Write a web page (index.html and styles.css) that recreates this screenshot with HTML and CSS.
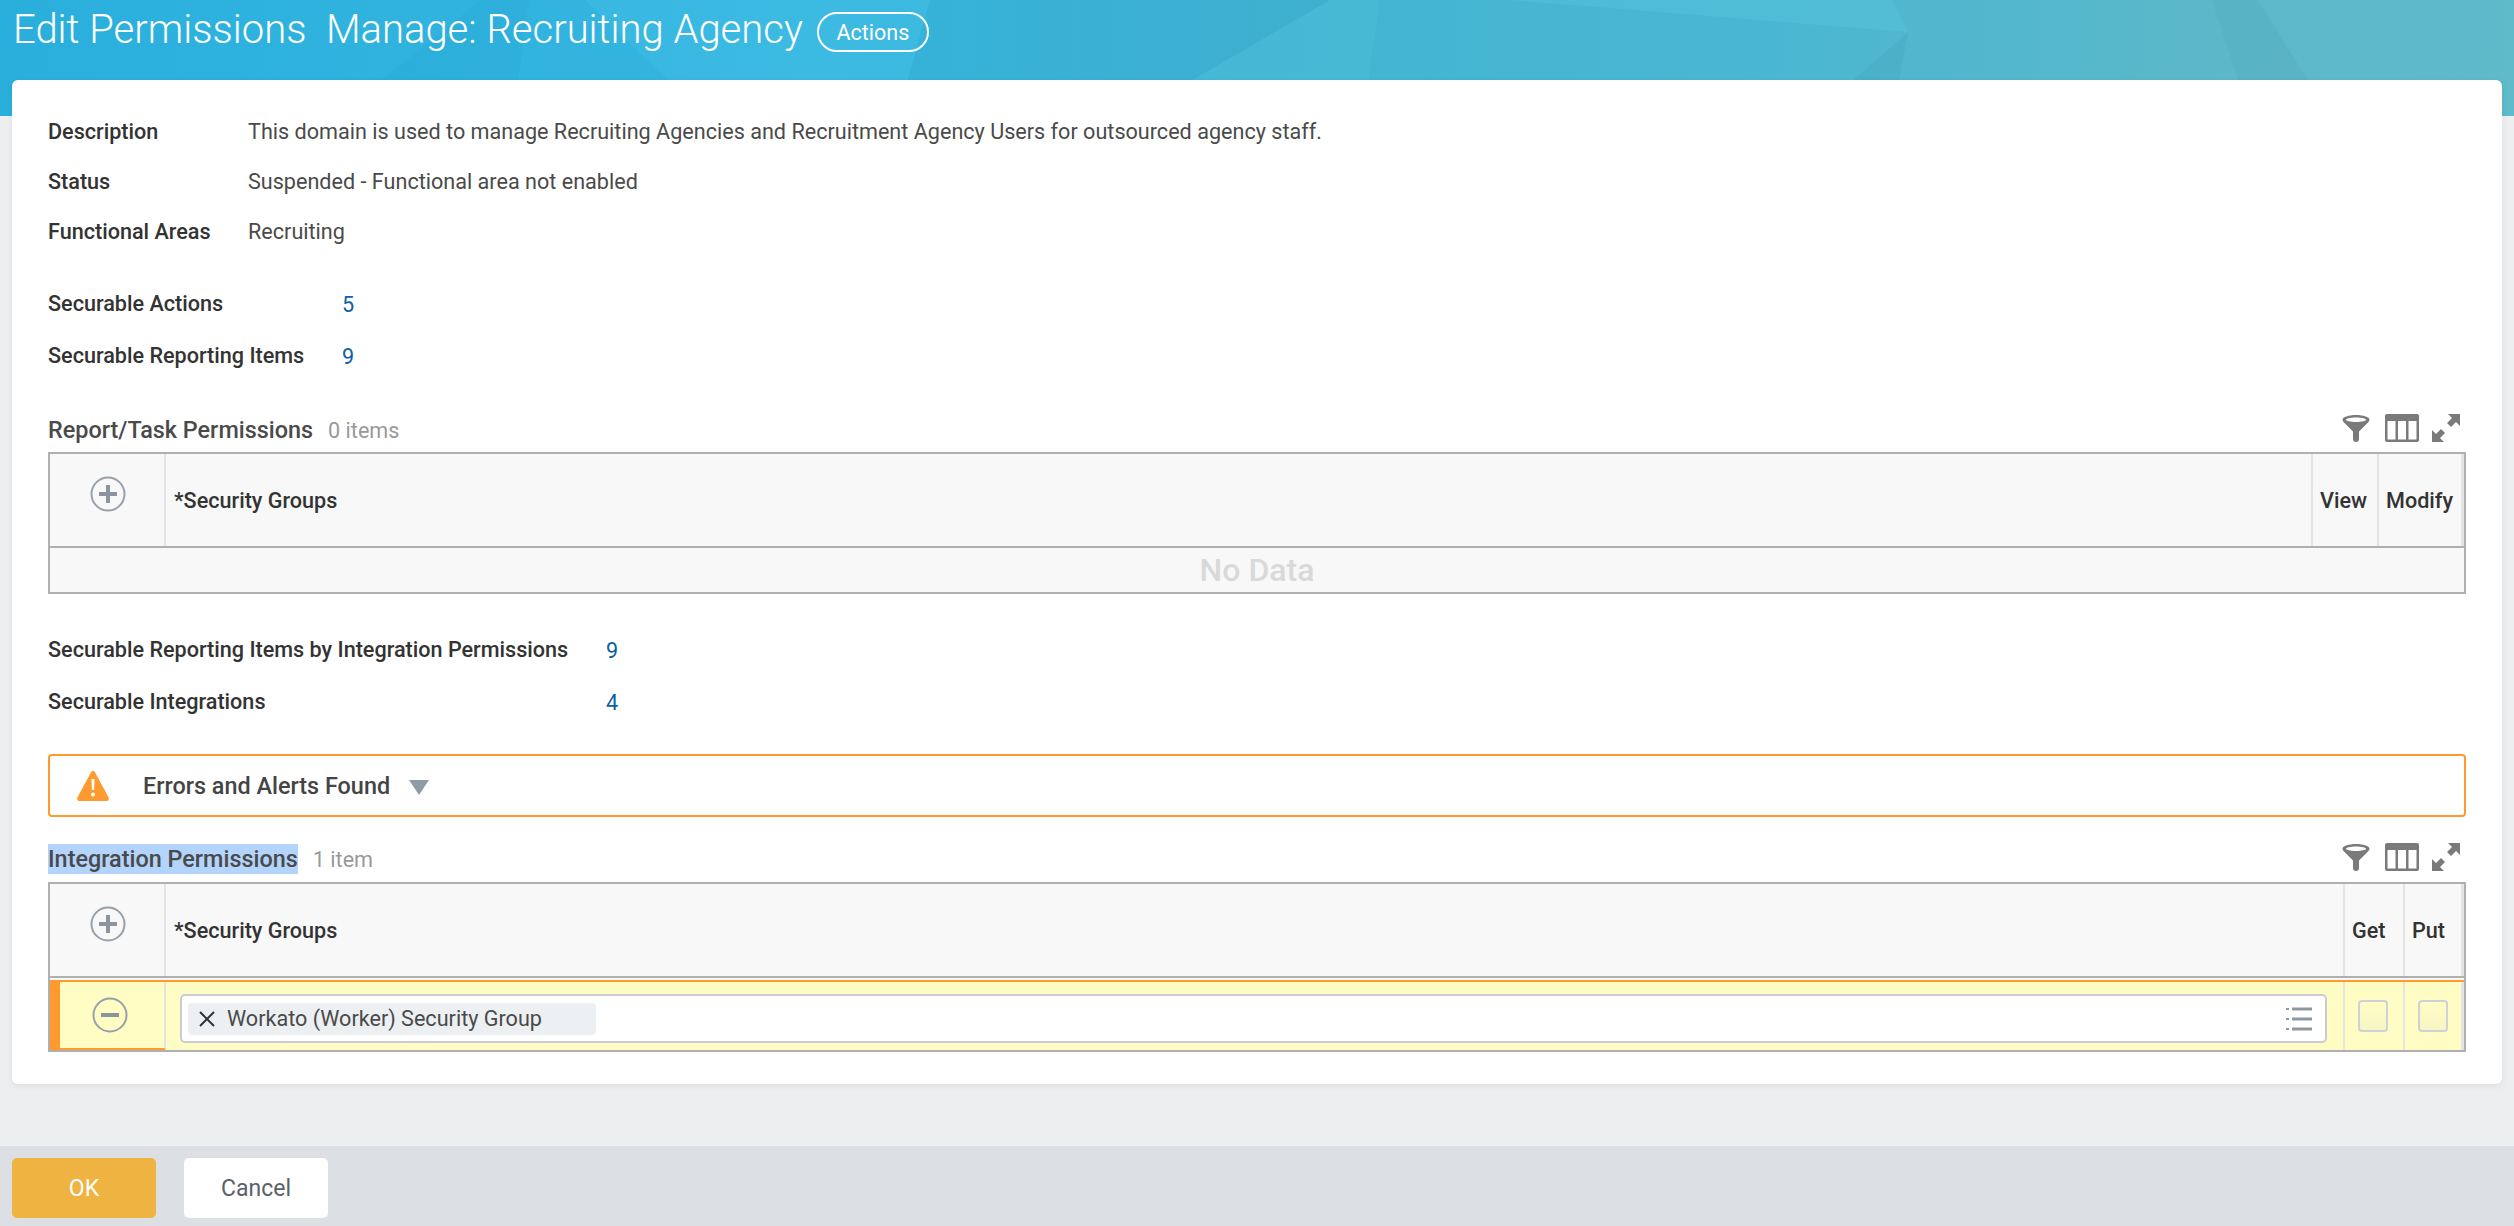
FILE: index.html
```html
<!DOCTYPE html>
<html>
<head>
  <meta charset="UTF-8">
  <meta name="viewport" content="width=device-width,initial-scale=1">
  <title>Edit Permissions</title>
  <link rel="stylesheet" href="styles.css">
</head>
<body>
  <header class="banner">
    <svg class="facets" viewBox="0 0 2514 116" preserveAspectRatio="none">
      <polygon points="481,0 337,116 513,116 529,0" fill="#1c9fd0" opacity="0.14"/>
      <polygon points="585,0 705,116 898,116 930,0" fill="#4ac4ea" opacity="0.28"/>
      <polygon points="930,0 898,116 1130,116 1330,0" fill="#2a9fc0" opacity="0.14"/>
      <polygon points="1130,116 1330,0 1380,0 1363,116" fill="#5ac8e0" opacity="0.22"/>
      <polygon points="1507,0 1908,32 1892,0" fill="#5cc8e0" opacity="0.35"/>
      <polygon points="1908,32 1812,116 1892,116" fill="#3f9fb8" opacity="0.25"/>
      <polygon points="2212,0 2250,116 2330,116 2258,0" fill="#52a8be" opacity="0.3"/>
      <polygon points="2258,0 2330,116 2475,116 2487,0" fill="#5fbccc" opacity="0.4"/>
    </svg>
    <h1 class="pagetitle">Edit Permissions&nbsp; Manage: Recruiting Agency</h1>
    <button class="actionsbutton">Actions</button>
  </header>

  <main class="card">
    <dl class="fields">
      <div class="field"><dt>Description</dt><dd>This domain is used to manage Recruiting Agencies and Recruitment Agency Users for outsourced agency staff.</dd></div>
      <div class="field"><dt>Status</dt><dd>Suspended - Functional area not enabled</dd></div>
      <div class="field"><dt>Functional Areas</dt><dd>Recruiting</dd></div>
    </dl>

    <div class="counts counts-first">
      <div class="count"><span class="countlabel">Securable Actions</span><a class="countvalue">5</a></div>
      <div class="count"><span class="countlabel">Securable Reporting Items</span><a class="countvalue">9</a></div>
    </div>

    <div class="gridtitle">
      <h2>Report/Task Permissions</h2><span class="itemcount">0 items</span>
      <div class="gridtools">
        <svg class="icon-filter" viewBox="0 0 28 28"><path d="M14 1C6.500 1 .5 3.200 .5 5.500c0 1.500 1 2.500 2.500 4l8 8V25a3 3 0 0 0 6 0v-7.500l8-8c1.500-1.500 2.500-2.500 2.500-4C27.500 3.200 21.500 1 14 1zm0 2.500c6 0 10 1 10 2.300S20 8 14 8 4 7 4 5.800 8 3.500 14 3.500z" fill="#7a7a7a"/></svg>
        <svg class="icon-columns" viewBox="0 0 34 28"><path d="M2 0h30a2 2 0 0 1 2 2v24a2 2 0 0 1-2 2H2a2 2 0 0 1-2-2V2a2 2 0 0 1 2-2zm.5 7v18.500h8V7zm10.500 0v18.500h8V7zm10.500 0v18.500h8V7z" fill="#7a7a7a"/></svg>
        <svg class="icon-expand" viewBox="0 0 28 28"><path d="M16 0h12v12l-4-4-5 5-4-4 5-5zM0 16l4 4 5-5 4 4-5 5 4 4H0z" fill="#7a7a7a"/></svg>
      </div>
    </div>
    <div class="grid">
      <div class="gridhead">
        <div class="cell cell-add">
          <svg class="roundicon" viewBox="0 0 36 36"><circle cx="18" cy="18" r="16.500" fill="none" stroke="#98a0a8" stroke-width="2"/><path d="M18 9v18M9 18h18" stroke="#8a949e" stroke-width="4"/></svg>
        </div>
        <div class="cell cell-name">*Security Groups</div>
        <div class="cell cell-view">View</div>
        <div class="cell cell-modify">Modify</div>
      </div>
      <div class="nodata">No Data</div>
    </div>

    <div class="counts counts-second">
      <div class="count"><span class="countlabel countlabel-wide">Securable Reporting Items by Integration Permissions</span><a class="countvalue">9</a></div>
      <div class="count"><span class="countlabel countlabel-wide">Securable Integrations</span><a class="countvalue">4</a></div>
    </div>

    <div class="alertbar">
      <svg class="alerticon" viewBox="0 0 32 30"><path d="M16 0c1 0 1.600.6 2 1.300L31.600 26.500c.8 1.600 0 3.500-1.800 3.500H2.200C.4 30-.4 28.100.4 26.500L14 1.300C14.400.6 15 0 16 0z" fill="#ff9b2e"/><path d="M14.400 8h3.200l-.5 11h-2.200zM16 21.500a2 2 0 1 1 0 4 2 2 0 0 1 0-4z" fill="#fff"/></svg>
      <span class="alerttext">Errors and Alerts Found</span>
      <span class="alertcaret"></span>
    </div>

    <div class="gridtitle gridtitle-second">
      <h2><span class="selected">Integration Permissions</span></h2><span class="itemcount">1 item</span>
      <div class="gridtools">
        <svg class="icon-filter" viewBox="0 0 28 28"><path d="M14 1C6.500 1 .5 3.200 .5 5.500c0 1.500 1 2.500 2.500 4l8 8V25a3 3 0 0 0 6 0v-7.500l8-8c1.500-1.500 2.500-2.500 2.500-4C27.500 3.200 21.500 1 14 1zm0 2.500c6 0 10 1 10 2.300S20 8 14 8 4 7 4 5.800 8 3.500 14 3.500z" fill="#7a7a7a"/></svg>
        <svg class="icon-columns" viewBox="0 0 34 28"><path d="M2 0h30a2 2 0 0 1 2 2v24a2 2 0 0 1-2 2H2a2 2 0 0 1-2-2V2a2 2 0 0 1 2-2zm.5 7v18.500h8V7zm10.500 0v18.500h8V7zm10.500 0v18.500h8V7z" fill="#7a7a7a"/></svg>
        <svg class="icon-expand" viewBox="0 0 28 28"><path d="M16 0h12v12l-4-4-5 5-4-4 5-5zM0 16l4 4 5-5 4 4-5 5 4 4H0z" fill="#7a7a7a"/></svg>
      </div>
    </div>
    <div class="grid">
      <div class="gridhead">
        <div class="cell cell-add">
          <svg class="roundicon" viewBox="0 0 36 36"><circle cx="18" cy="18" r="16.500" fill="none" stroke="#98a0a8" stroke-width="2"/><path d="M18 9v18M9 18h18" stroke="#8a949e" stroke-width="4"/></svg>
        </div>
        <div class="cell cell-name">*Security Groups</div>
        <div class="cell cell-get">Get</div>
        <div class="cell cell-put">Put</div>
      </div>
      <div class="gridrow">
        <div class="rowcell rowcell-remove">
          <svg class="roundicon" viewBox="0 0 36 36"><circle cx="18" cy="18" r="16.500" fill="none" stroke="#98a0a8" stroke-width="2"/><path d="M9 18h18" stroke="#8a949e" stroke-width="4"/></svg>
        </div>
        <div class="rowcell rowcell-name">
          <div class="prompt">
            <span class="pill">
              <svg class="pillx" viewBox="0 0 16 16"><path d="M1 1l14 14M15 1L1 15" stroke="#333" stroke-width="2"/></svg>
              Workato (Worker) Security Group
            </span>
            <svg class="listicon" viewBox="0 0 26 24"><path d="M0 1h3v2H0zM6 0.500h20v3H6zM0 11h3v2H0zM6 10.500h20v3H6zM0 21h3v2H0zM6 20.500h20v3H6z" fill="#8f979f"/></svg>
          </div>
        </div>
        <div class="rowcell rowcell-get"><span class="check"></span></div>
        <div class="rowcell rowcell-put"><span class="check"></span></div>
      </div>
    </div>
  </main>

  <footer class="buttonbar">
    <button class="okbutton">OK</button>
    <button class="cancelbutton">Cancel</button>
  </footer>
</body>
</html>
```

FILE: styles.css
```css
html, body {
  margin: 0;
  height: 100%;
}

body {
  display: flex;
  flex-direction: column;
  height: 1226px;
  overflow: hidden;
  background: #edeef0;
  font-family: Roboto, "Liberation Sans", sans-serif;
  font-size: 21.6px;
  color: #333333;
}

/*banner*/

.banner {
  position: relative;
  flex: none;
  display: flex;
  align-items: flex-start;
  height: 116px;
  padding-left: 13px;
  box-sizing: border-box;
  background: linear-gradient(90deg, #2aafdd 0%, #35b6e0 32%, #41b4d3 50%, #4ab7d2 70%, #5bb8c9 88%, #5fbaca 100%);
}

.facets {
  position: absolute;
  top: 0;
  left: 0;
  width: 100%;
  height: 100%;
}

.pagetitle {
  position: relative;
  margin: 7px 0 0 0;
  font-size: 40px;
  line-height: 46px;
  font-weight: 300;
  color: #ffffff;
  white-space: nowrap;
}

.actionsbutton {
  position: relative;
  width: 112px;
  height: 40px;
  margin: 12px 0 0 14px;
  padding: 0;
  border: 2px solid #ffffff;
  border-radius: 20px;
  background: transparent;
  color: #ffffff;
  font-family: inherit;
  font-size: 21.5px;
  font-weight: 400;
}

/*card*/

.card {
  position: relative;
  flex: none;
  height: 1004px;
  margin: -36px 12px 0 12px;
  padding: 0 36px;
  box-sizing: border-box;
  border-radius: 6px;
  background: #ffffff;
  box-shadow: 0 2px 6px rgba(0, 0, 0, 0.07);
}

.fields {
  margin: 0;
  padding-top: 26px;
}

.field {
  display: flex;
  align-items: center;
  height: 50px;
}

.field dt {
  width: 200px;
  font-weight: 500;
}

.field dd {
  margin: 0;
  color: #4a4a4a;
}

.counts-first {
  margin-top: 21px;
}

.counts-second {
  margin-top: 29px;
}

.count {
  display: flex;
  align-items: center;
  height: 52px;
}

.countlabel {
  width: 294px;
  font-weight: 500;
}

.countlabel-wide {
  width: 558px;
}

.countvalue {
  position: relative;
  top: 1px;
  color: #0b5fa5;
}

/*grid title*/

.gridtitle {
  display: flex;
  align-items: center;
  height: 30px;
  margin-top: 34px;
  margin-bottom: 7px;
}

.gridtitle-second {
  margin-top: 27px;
  margin-bottom: 8px;
}

.gridtitle h2 {
  margin: 0;
  font-size: 23.4px;
  font-weight: 500;
  color: #4a4a4a;
}

.selected {
  display: block;
  height: 30px;
  line-height: 30px;
  background: #b3d4fc;
}

.itemcount {
  margin-left: 15px;
  color: #999999;
}

.gridtools {
  display: flex;
  align-items: center;
  gap: 15px;
  margin-left: auto;
  margin-right: 6px;
  margin-bottom: 5px;
}

.icon-filter {
  width: 28px;
  height: 28px;
}

.icon-columns {
  width: 34px;
  height: 28px;
}

.icon-expand {
  width: 28px;
  height: 28px;
  margin-left: -2px;
}

/*grid*/

.grid {
  border: 2px solid #b0b0b0;
  background: #f8f8f8;
}

.gridhead {
  display: flex;
  height: 92px;
  border-bottom: 2px solid #b0b0b0;
}

.cell {
  display: flex;
  align-items: center;
  box-sizing: border-box;
  padding-left: 7px;
  border-right: 2px solid #e4e4e4;
  font-weight: 500;
  color: #333333;
}

.cell-add {
  justify-content: center;
  align-items: flex-start;
  width: 116px;
  padding-top: 22px;
  padding-left: 2px;
}

.cell-name {
  flex: 1;
  padding-left: 8px;
}

.cell-view {
  width: 66px;
}

.cell-modify {
  width: 85px;
  border-right: 3px solid #e4e4e4;
}

.cell-get {
  width: 60px;
}

.cell-put {
  width: 59px;
  border-right: 3px solid #e4e4e4;
}

.roundicon {
  width: 36px;
  height: 36px;
}

.nodata {
  height: 44px;
  line-height: 44px;
  text-align: center;
  font-size: 32px;
  font-weight: 500;
  color: #d9d9d9;
}

.gridrow {
  display: flex;
  height: 70px;
  margin-top: 2px;
  box-sizing: border-box;
  border-top: 2px solid #ff9b2e;
  background: #fffcc4;
}

.rowcell {
  display: flex;
  align-items: center;
  box-sizing: border-box;
  border-right: 2px solid #e4e4e4;
}

.rowcell-remove {
  justify-content: center;
  width: 116px;
  padding-right: 4px;
  border-left: 10px solid #ff9b2e;
  border-bottom: 2px solid #ff9b2e;
}

.rowcell-name {
  flex: 1;
  padding: 5px 16px 0 14px;
}

.rowcell-get {
  width: 60px;
  justify-content: center;
  padding-right: 2px;
}

.rowcell-put {
  width: 59px;
  justify-content: center;
  border-right: 3px solid #e4e4e4;
}

.prompt {
  display: flex;
  align-items: center;
  flex: 1;
  height: 49px;
  padding: 0 13px 0 6px;
  box-sizing: border-box;
  border: 2px solid #c9ccd3;
  border-radius: 5px;
  background: #ffffff;
}

.pill {
  display: flex;
  align-items: center;
  width: 408px;
  height: 32px;
  padding-left: 11px;
  box-sizing: border-box;
  border-radius: 4px;
  background: #ecf0f3;
  color: #4a4a4a;
}

.pillx {
  width: 16px;
  height: 16px;
  margin-right: 12px;
}

.listicon {
  width: 26px;
  height: 24px;
  margin-left: auto;
}

.check {
  width: 30px;
  height: 32px;
  box-sizing: border-box;
  border: 2px solid #ced2d8;
  border-radius: 4px;
  background: linear-gradient(180deg, #fffcc4 0%, #f6f6c4 100%);
}

/*alert*/

.alertbar {
  display: flex;
  align-items: center;
  height: 63px;
  margin-top: 27px;
  padding-left: 27px;
  box-sizing: border-box;
  border: 2px solid #ff9b2e;
  border-radius: 4px;
}

.alerticon {
  width: 32px;
  height: 30px;
  margin-right: 34px;
}

.alerttext {
  font-size: 23.4px;
  font-weight: 500;
  color: #444444;
}

.alertcaret {
  width: 0;
  height: 0;
  margin-left: 19px;
  margin-top: 3px;
  border-left: 10px solid transparent;
  border-right: 10px solid transparent;
  border-top: 15px solid #8f9ca6;
}

/*buttons*/

.buttonbar {
  flex: 1;
  display: flex;
  align-items: flex-start;
  gap: 28px;
  margin-top: 62px;
  padding: 12px 12px 0 12px;
  background: #dcdfe4;
}

.buttonbar button {
  width: 144px;
  height: 60px;
  border: none;
  border-radius: 5px;
  font-family: inherit;
  font-size: 23px;
}

.okbutton {
  background: #efb342;
  color: #ffffff;
}

.cancelbutton {
  background: #ffffff;
  color: #5a6168;
}
```
